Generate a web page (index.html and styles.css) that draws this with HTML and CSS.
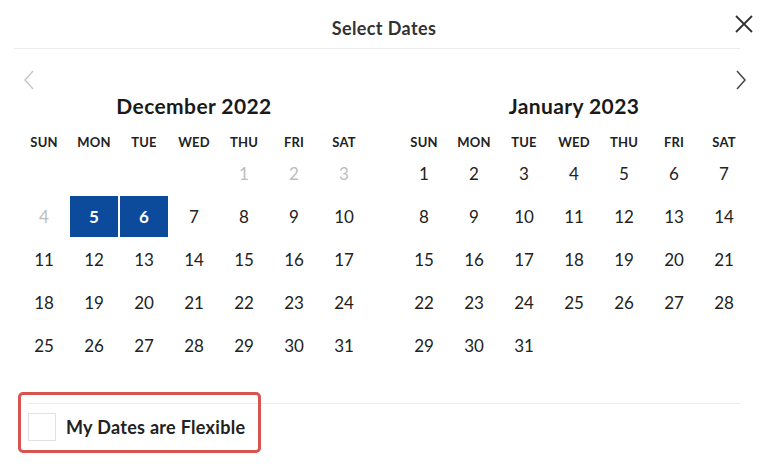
FILE: index.html
```html
<!DOCTYPE html>
<html lang="en">

<head>
  <meta charset="UTF-8">
  <meta name="viewport" content="width=device-width, initial-scale=1.0">
  <title>Select Dates</title>
  <link rel="stylesheet" href="styles.css">
</head>

<body>
  <div class="modal">
    <div class="tete">
      <span></span>
      <strong class="titre">Select Dates</strong>
      <button class="fermer" aria-label="Close">
        <svg width="20" height="20" viewBox="0 0 20 20"><path d="M2 2 L18 18 M18 2 L2 18" stroke="#333" stroke-width="1.8" fill="none" /></svg>
      </button>
    </div>
    <div class="trait"></div>

    <div class="nav">
      <button class="fleche" aria-label="Previous month">
        <svg width="12" height="20" viewBox="0 0 12 20"><path d="M10 1 L2 10 L10 19" stroke="#c8c8c8" stroke-width="1.5" fill="none" /></svg>
      </button>
      <button class="fleche" aria-label="Next month">
        <svg width="12" height="20" viewBox="0 0 12 20"><path d="M2 1 L10 10 L2 19" stroke="#444" stroke-width="1.5" fill="none" /></svg>
      </button>
    </div>

    <div class="mois-liste">
      <div class="mois">
        <h3 class="titre-mois">December 2022</h3>
        <div class="semaine">
          <span>SUN</span><span>MON</span><span>TUE</span><span>WED</span><span>THU</span><span>FRI</span><span>SAT</span>
        </div>
        <div class="jours">
          <span></span><span></span><span></span><span></span>
          <span class="passe">1</span><span class="passe">2</span><span class="passe">3</span>
          <span class="passe">4</span><span class="choisi">5</span><span class="choisi">6</span><span>7</span><span>8</span><span>9</span><span>10</span>
          <span>11</span><span>12</span><span>13</span><span>14</span><span>15</span><span>16</span><span>17</span>
          <span>18</span><span>19</span><span>20</span><span>21</span><span>22</span><span>23</span><span>24</span>
          <span>25</span><span>26</span><span>27</span><span>28</span><span>29</span><span>30</span><span>31</span>
        </div>
      </div>

      <div class="mois">
        <h3 class="titre-mois">January 2023</h3>
        <div class="semaine">
          <span>SUN</span><span>MON</span><span>TUE</span><span>WED</span><span>THU</span><span>FRI</span><span>SAT</span>
        </div>
        <div class="jours">
          <span>1</span><span>2</span><span>3</span><span>4</span><span>5</span><span>6</span><span>7</span>
          <span>8</span><span>9</span><span>10</span><span>11</span><span>12</span><span>13</span><span>14</span>
          <span>15</span><span>16</span><span>17</span><span>18</span><span>19</span><span>20</span><span>21</span>
          <span>22</span><span>23</span><span>24</span><span>25</span><span>26</span><span>27</span><span>28</span>
          <span>29</span><span>30</span><span>31</span>
        </div>
      </div>
    </div>

    <div class="pied">
      <label class="flexible">
        <span class="case"></span>
        <strong>My Dates are Flexible</strong>
      </label>
      <div class="cadre-rouge"></div>
    </div>
  </div>
</body>

</html>
```

FILE: styles.css
```css
body {
  margin: 0;
  font-family: Lato, "Noto Sans", sans-serif;
  color: #222;
  background-color: #fff;
}

button {
  background: none;
  border: none;
  padding: 0;
  cursor: pointer;
}

.modal {
  width: 768px;
  height: 469px;
  overflow: hidden;
}

.tete {
  display: grid;
  grid-template-columns: 1fr auto 1fr;
  align-items: center;
  height: 48px;
}

.titre {
  font-size: 18px;
  font-weight: 700;
  letter-spacing: 0.4px;
  color: #333;
  padding-top: 8px;
}

.fermer {
  justify-self: end;
  margin-right: 14px;
  display: flex;
}

.trait {
  height: 1px;
  background-color: #ececec;
  margin: 0 28px 0 14px;
}

.nav {
  display: flex;
  justify-content: space-between;
  align-items: center;
  height: 28px;
  margin-top: 17px;
  padding: 0 21px 0 23px;
}

.fleche {
  display: flex;
}

.mois-liste {
  display: flex;
  gap: 30px;
  padding: 0 19px;
}

.mois {
  width: 350px;
}

.titre-mois {
  margin: 0;
  height: 24px;
  line-height: 24px;
  text-align: center;
  font-size: 21px;
  font-weight: 700;
  letter-spacing: 0.4px;
  color: #1a1a1a;
}

.semaine {
  display: grid;
  grid-template-columns: repeat(7, 50px);
  height: 23px;
  margin-top: 13px;
  font-size: 13px;
  font-weight: 700;
  letter-spacing: 0.2px;
  color: #222;
  text-align: center;
  line-height: 23px;
}

.jours {
  display: grid;
  grid-template-columns: repeat(7, 50px);
  grid-auto-rows: 43px;
  margin-top: -2px;
  font-size: 17px;
  color: #222;
}

.jours span {
  display: flex;
  align-items: center;
  justify-content: center;
  margin: 1px;
}

.jours .passe {
  color: #bdbdbd;
}

.jours .choisi {
  background-color: #0c4b9c;
  color: #fff;
  font-weight: 700;
}

.pied {
  position: relative;
  margin: 36px 28px 0 28px;
  border-top: 1px solid #ececec;
  padding-top: 9px;
}

.flexible {
  display: flex;
  align-items: center;
  gap: 10px;
}

.case {
  width: 26px;
  height: 26px;
  border: 1px solid #e2e2e2;
}

.flexible strong {
  font-size: 18px;
  letter-spacing: 0.3px;
  color: #222;
}

.cadre-rouge {
  position: absolute;
  left: -10px;
  top: -12px;
  width: 237px;
  height: 55px;
  border: 3px solid #d9534f;
  border-radius: 5px;
}
```
